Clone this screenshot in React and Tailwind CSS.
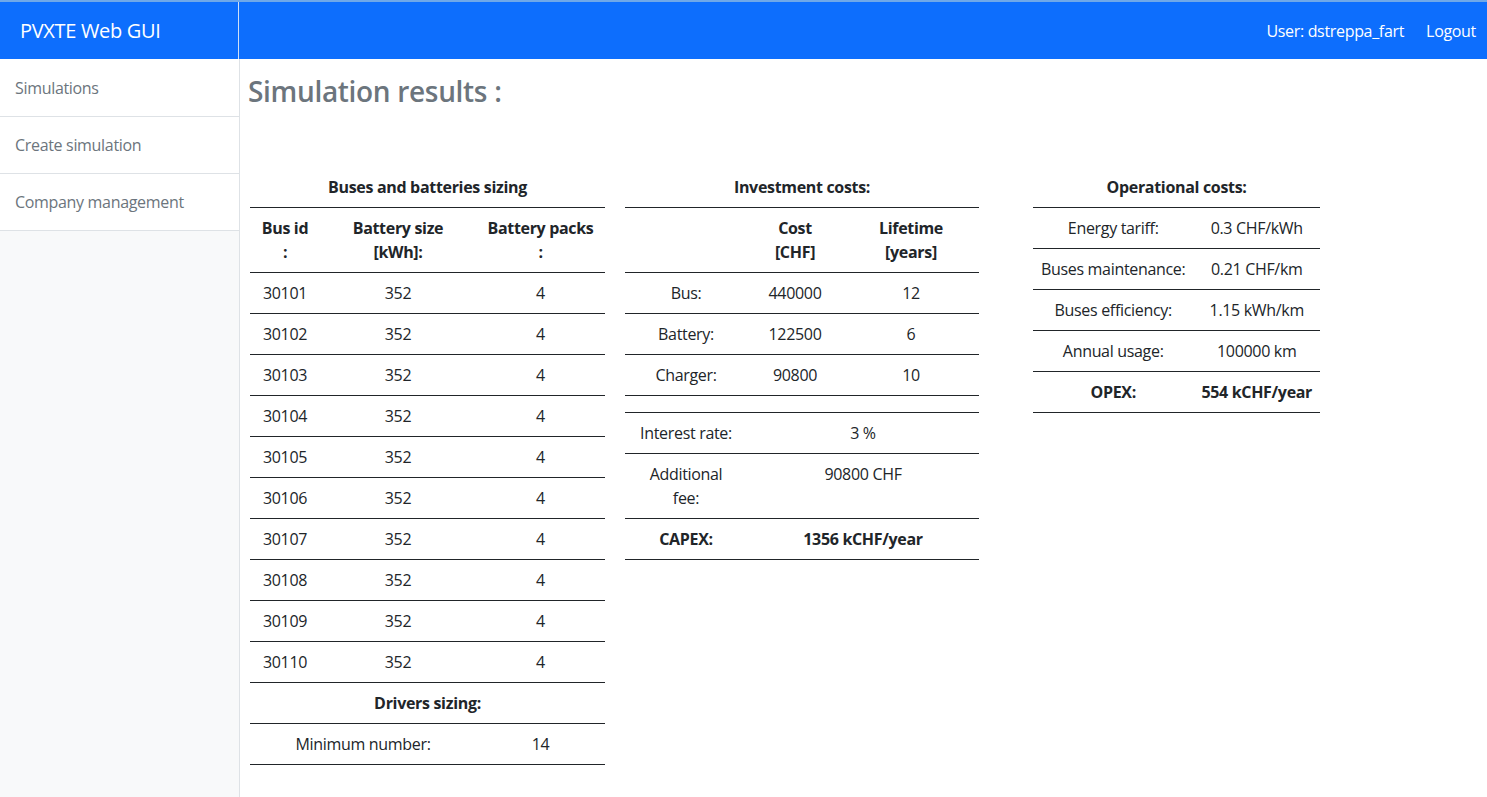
import React from 'react';

const font = { fontFamily: '"Open Sans", "Noto Sans", sans-serif' };

const buses = [30101, 30102, 30103, 30104, 30105, 30106, 30107, 30108, 30109, 30110];

function Caption({ children, span }) {
  return (
    <tr>
      <th colSpan={span} className="px-2 py-2 text-center font-bold leading-6 whitespace-nowrap">{children}</th>
    </tr>
  );
}

function Row({ cells, bold, widths }) {
  return (
    <tr className="border-b border-[#212529]">
      {cells.map((c, i) => (
        <td
          key={i}
          colSpan={c.span || 1}
          className={`px-2 py-2 text-center align-top leading-6 whitespace-nowrap ${bold ? 'font-bold' : ''} ${widths ? widths[i] : ''}`}
        >
          {c.text}
        </td>
      ))}
    </tr>
  );
}

function BusesTable() {
  return (
    <table className="w-[355px] border-collapse text-[#212529] text-base">
      <thead>
        <Caption span={3}>Buses and batteries sizing</Caption>
        <tr className="border-y border-[#212529]">
          <th className="w-[70px] px-2 py-2 leading-6">Bus id<br />:</th>
          <th className="w-[156px] px-2 py-2 leading-6">Battery size<br />[kWh]:</th>
          <th className="px-2 py-2 leading-6 whitespace-nowrap">Battery packs<br />:</th>
        </tr>
      </thead>
      <tbody>
        {buses.map((b) => (
          <Row key={b} cells={[{ text: b }, { text: 352 }, { text: 4 }]} />
        ))}
        <Row bold cells={[{ text: 'Drivers sizing:', span: 3 }]} />
        <Row cells={[{ text: 'Minimum number:', span: 2 }, { text: 14 }]} />
      </tbody>
    </table>
  );
}

function InvestmentTable() {
  return (
    <table className="w-[354px] border-collapse text-[#212529] text-base">
      <thead>
        <Caption span={3}>Investment costs:</Caption>
        <tr className="border-y border-[#212529]">
          <th className="w-[122px] px-2 py-2 leading-6"></th>
          <th className="w-[96px] px-2 py-2 leading-6">Cost<br />[CHF]</th>
          <th className="px-2 py-2 leading-6">Lifetime<br />[years]</th>
        </tr>
      </thead>
      <tbody>
        <Row cells={[{ text: 'Bus:' }, { text: '440000' }, { text: '12' }]} />
        <Row cells={[{ text: 'Battery:' }, { text: '122500' }, { text: '6' }]} />
        <Row cells={[{ text: 'Charger:' }, { text: '90800' }, { text: '10' }]} />
        <tr className="border-b border-[#212529]">
          <td colSpan={3} className="h-[17px] p-0"></td>
        </tr>
        <Row cells={[{ text: 'Interest rate:' }, { text: '3 %', span: 2 }]} />
        <Row cells={[{ text: <>Additional<br />fee:</> }, { text: '90800 CHF', span: 2 }]} />
        <Row bold cells={[{ text: 'CAPEX:' }, { text: '1356 kCHF/year', span: 2 }]} />
      </tbody>
    </table>
  );
}

function OperationalTable() {
  return (
    <table className="w-[287px] border-collapse text-[#212529] text-base">
      <thead>
        <Caption span={2}>Operational costs:</Caption>
      </thead>
      <tbody className="border-t border-[#212529]">
        <Row widths={['w-[160px]', '']} cells={[{ text: 'Energy tariff:' }, { text: '0.3 CHF/kWh' }]} />
        <Row cells={[{ text: 'Buses maintenance:' }, { text: '0.21 CHF/km' }]} />
        <Row cells={[{ text: 'Buses efficiency:' }, { text: '1.15 kWh/km' }]} />
        <Row cells={[{ text: 'Annual usage:' }, { text: '100000 km' }]} />
        <Row bold cells={[{ text: 'OPEX:' }, { text: '554 kCHF/year' }]} />
      </tbody>
    </table>
  );
}

export default function App() {
  return (
    <div style={font} className="w-[1487px] h-[797px] flex flex-col bg-white overflow-hidden tracking-[-0.02em]">
      <header className="h-[59px] flex shrink-0 bg-[#0d6efd] border-t-2 border-[#6fa8e8]">
        <div className="w-[239px] flex items-center pl-5 text-white text-xl border-r border-[#cfe0f7]">
          PVXTE Web GUI
        </div>
        <div className="flex-1 flex items-center justify-end gap-[22px] pr-[11px] text-white text-base">
          <span>User: dstreppa_fart</span>
          <span>Logout</span>
        </div>
      </header>
      <div className="flex flex-1 min-h-0">
        <nav className="w-[240px] shrink-0 bg-[#f8f9fa] border-r border-[#dee2e6]">
          {['Simulations', 'Create simulation', 'Company management'].map((item) => (
            <div key={item} className="h-[57px] first:h-[58px] flex items-center px-[15px] bg-white border-b border-[#dee2e6] text-[#6c757d] text-base">
              {item}
            </div>
          ))}
        </nav>
        <main className="flex-1 pl-2 pt-[16px]">
          <h2 className="text-[28px] font-semibold leading-[1.2] text-[#6c757d]">Simulation results :</h2>
          <div className="flex items-start mt-[58px] ml-[2px]">
            <BusesTable />
            <div className="ml-5">
              <InvestmentTable />
            </div>
            <div className="ml-[54px]">
              <OperationalTable />
            </div>
          </div>
        </main>
      </div>
    </div>
  );
}
